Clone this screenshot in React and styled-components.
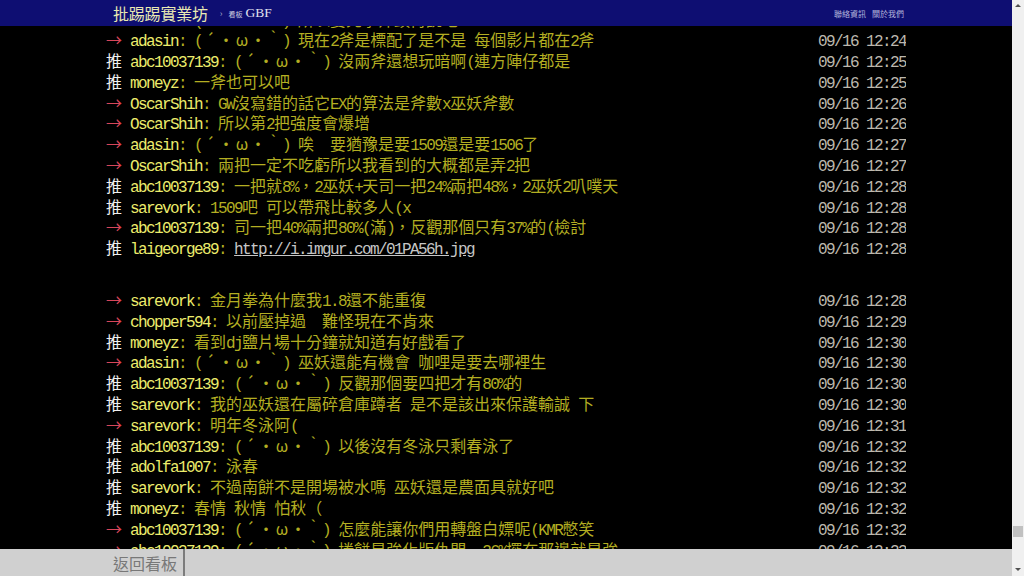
import React from 'react';
import styled, { createGlobalStyle } from 'styled-components';

const GlobalStyle = createGlobalStyle`
  html, body {
    margin: 0;
    padding: 0;
    height: 100%;
    overflow: hidden;
    background: #000;
  }
  body {
    font-family: "Noto Sans CJK TC", "Liberation Sans", sans-serif;
  }
`;

const Shell = styled.div`
  display: flex;
  width: 100vw;
  height: 100vh;
`;

const Page = styled.div`
  flex: 1;
  position: relative;
  overflow: hidden;
  background: #000;
`;

// header and footer are fixed bars laid over the scrolled screen
const TopBar = styled.header`
  position: absolute;
  top: 0;
  left: 0;
  right: 0;
  height: 26px;
  background: #0e0e72;
  z-index: 2;
`;

const BarInner = styled.div`
  width: 800px;
  height: 100%;
  margin: 0 auto;
  display: flex;
  align-items: center;
`;

const Logo = styled.a`
  margin-left: 7px;
  font-size: 16px;
  line-height: 1;
  color: #e9e9b2;
  letter-spacing: -0.2px;
  text-decoration: none;
`;

const Crumb = styled.span`
  margin: 0 6px 0 12px;
  font-size: 9px;
  color: #a8a8c8;
`;

const BoardLink = styled.a`
  display: flex;
  align-items: baseline;
  gap: 3px;
  color: #e0e0ee;
  text-decoration: none;
`;

const BoardLabel = styled.span`
  font-size: 7px;
  color: #d0d0e0;
`;

const BoardName = styled.span`
  font-family: "Liberation Serif", serif;
  font-size: 13.5px;
`;

const NavLinks = styled.nav`
  margin-left: auto;
  margin-right: 2px;
  display: flex;
  gap: 6px;
`;

const NavLink = styled.a`
  font-size: 8px;
  color: #b4b4dc;
  text-decoration: none;
`;

const Screen = styled.main`
  width: 800px;
  margin: 0 auto;
  padding-top: 8.5px;
  font-size: 16px;
  line-height: 20.8px;
  white-space: pre;
`;

const Row = styled.div`
  display: flex;
  height: 20.8px;
  overflow: hidden;
`;

const Line = styled.span`
  flex: 1;
`;

const Tag = styled.span`
  color: ${p => (p.$kind === 'push' ? '#f0f0f0' : '#d8465a')};
`;

const UserId = styled.span`
  color: #ecec6c;
`;

const Content = styled.span`
  color: #b3ae22;
`;

const Link = styled.a`
  color: #c6c6c6;
  text-decoration: underline;
`;

const Time = styled.span`
  color: #bdb8ae;
`;

// ascii runs sit on the half-width terminal grid (0.5em per char)
const Half = styled.span`
  font-family: "Liberation Mono", monospace;
  letter-spacing: -0.1em;
`;

// symbols that are narrow in the CJK font but take a full cell on the bbs
const Cell = styled.span`
  display: inline-block;
  width: 1em;
  text-align: center;
`;

const RichContent = styled.div`
  height: 31px;
`;

const BottomBar = styled.footer`
  position: absolute;
  left: 0;
  right: 0;
  bottom: 0;
  height: 27px;
  background: #d0d0d0;
  z-index: 2;
`;

const BackLink = styled.a`
  display: flex;
  align-items: center;
  height: 100%;
  padding: 0 6px 0 7px;
  border-right: 2px solid #7c7c7c;
  font-size: 16px;
  color: #787878;
  text-decoration: none;
`;

const Scrollbar = styled.aside`
  position: relative;
  width: 12px;
  height: 100vh;
  background: #f0f0f0;
`;

const Arrow = styled.span`
  position: absolute;
  left: 3px;
  width: 0;
  height: 0;
  border-left: 3px solid transparent;
  border-right: 3px solid transparent;
  ${p => (p.$dir === 'up'
    ? 'top: 4px; border-bottom: 3px solid #505050;'
    : 'bottom: 5px; border-top: 3px solid #505050;')}
`;

const Thumb = styled.span`
  position: absolute;
  left: 1px;
  right: 1px;
  top: 526px;
  height: 11px;
  background: #c1c1c1;
`;

const GRID = /([\x20-\x7e]+|[´ω→])/;

function cells(text) {
  return text.split(GRID).filter(Boolean).map((part, i) => {
    if (/^[\x20-\x7e]+$/.test(part)) return <Half key={i}>{part}</Half>;
    if (/^[´ω→]$/.test(part)) return <Cell key={i}>{part}</Cell>;
    return <React.Fragment key={i}>{part}</React.Fragment>;
  });
}

const KAO = '(´・ω・｀) ';

const pushes = [
  { tag: 'arrow', user: 'adasin', text: KAO + '所以要先拿斧頭再說吧', time: '09/16 12:24' },
  { tag: 'arrow', user: 'adasin', text: KAO + '現在2斧是標配了是不是 每個影片都在2斧', time: '09/16 12:24' },
  { tag: 'push', user: 'abc10037139', text: KAO + '沒兩斧還想玩暗啊(連方陣仔都是', time: '09/16 12:25' },
  { tag: 'push', user: 'moneyz', text: '一斧也可以吧', time: '09/16 12:25' },
  { tag: 'arrow', user: 'OscarShih', text: 'GW沒寫錯的話它EX的算法是斧數x巫妖斧數', time: '09/16 12:26' },
  { tag: 'arrow', user: 'OscarShih', text: '所以第2把強度會爆增', time: '09/16 12:26' },
  { tag: 'arrow', user: 'adasin', text: KAO + '唉　要猶豫是要1509還是要1506了', time: '09/16 12:27' },
  { tag: 'arrow', user: 'OscarShih', text: '兩把一定不吃虧所以我看到的大概都是弄2把', time: '09/16 12:27' },
  { tag: 'push', user: 'abc10037139', text: '一把就8%，2巫妖+天司一把24%兩把48%，2巫妖2叭噗天', time: '09/16 12:28' },
  { tag: 'push', user: 'sarevork', text: '1509吧 可以帶飛比較多人(x', time: '09/16 12:28' },
  { tag: 'arrow', user: 'abc10037139', text: '司一把40%兩把80%(滿)，反觀那個只有37%的(檢討', time: '09/16 12:28' },
  { tag: 'push', user: 'laigeorge89', link: 'http://i.imgur.com/01PA56h.jpg', time: '09/16 12:28' },
  { tag: 'arrow', user: 'sarevork', text: '金月拳為什麼我1.8還不能重復', time: '09/16 12:28' },
  { tag: 'arrow', user: 'chopper594', text: '以前壓掉過　難怪現在不肯來', time: '09/16 12:29' },
  { tag: 'push', user: 'moneyz', text: '看到dj鹽片場十分鐘就知道有好戲看了', time: '09/16 12:30' },
  { tag: 'arrow', user: 'adasin', text: KAO + '巫妖還能有機會 咖哩是要去哪裡生', time: '09/16 12:30' },
  { tag: 'push', user: 'abc10037139', text: KAO + '反觀那個要四把才有80%的', time: '09/16 12:30' },
  { tag: 'push', user: 'sarevork', text: '我的巫妖還在屬碎倉庫蹲者 是不是該出來保護輸誠 下', time: '09/16 12:30' },
  { tag: 'arrow', user: 'sarevork', text: '明年冬泳阿(', time: '09/16 12:31' },
  { tag: 'push', user: 'abc10037139', text: KAO + '以後沒有冬泳只剩春泳了', time: '09/16 12:32' },
  { tag: 'push', user: 'adolfa1007', text: '泳春', time: '09/16 12:32' },
  { tag: 'push', user: 'sarevork', text: '不過南餅不是開場被水嗎 巫妖還是農面具就好吧', time: '09/16 12:32' },
  { tag: 'push', user: 'moneyz', text: '春情 秋情 怕秋（', time: '09/16 12:32' },
  { tag: 'arrow', user: 'abc10037139', text: KAO + '怎麼能讓你們用轉盤白嫖呢(KMR憋笑', time: '09/16 12:32' },
  { tag: 'arrow', user: 'abc10037139', text: KAO + '捲餅是強化版仇問　36%擺在那邊就是強', time: '09/16 12:33' },
];

const Push = ({ push }) => (
  <Row>
    <Line>
      <Tag $kind={push.tag}>{cells(push.tag === 'push' ? '推 ' : '→ ')}</Tag>
      <UserId>{cells(push.user)}</UserId>
      <Content>
        {cells(': ')}
        {push.link ? <Link href="#">{cells(push.link)}</Link> : cells(push.text)}
      </Content>
    </Line>
    <Time>{cells(push.time)}</Time>
  </Row>
);

const App = () => {
  return (
    <Shell>
      <GlobalStyle />
      <Page>
        <TopBar>
          <BarInner>
            <Logo href="#">批踢踢實業坊</Logo>
            <Crumb>›</Crumb>
            <BoardLink href="#">
              <BoardLabel>看板</BoardLabel>
              <BoardName>GBF</BoardName>
            </BoardLink>
            <NavLinks>
              <NavLink href="#">聯絡資訊</NavLink>
              <NavLink href="#">關於我們</NavLink>
            </NavLinks>
          </BarInner>
        </TopBar>

        <Screen>
          {pushes.slice(0, 12).map((p, i) => <Push key={i} push={p} />)}
          <RichContent />
          {pushes.slice(12).map((p, i) => <Push key={i + 12} push={p} />)}
        </Screen>

        <BottomBar>
          <BarInner>
            <BackLink href="#">返回看板</BackLink>
          </BarInner>
        </BottomBar>
      </Page>
      <Scrollbar>
        <Arrow $dir="up" />
        <Thumb />
        <Arrow $dir="down" />
      </Scrollbar>
    </Shell>
  );
};

export default App;
